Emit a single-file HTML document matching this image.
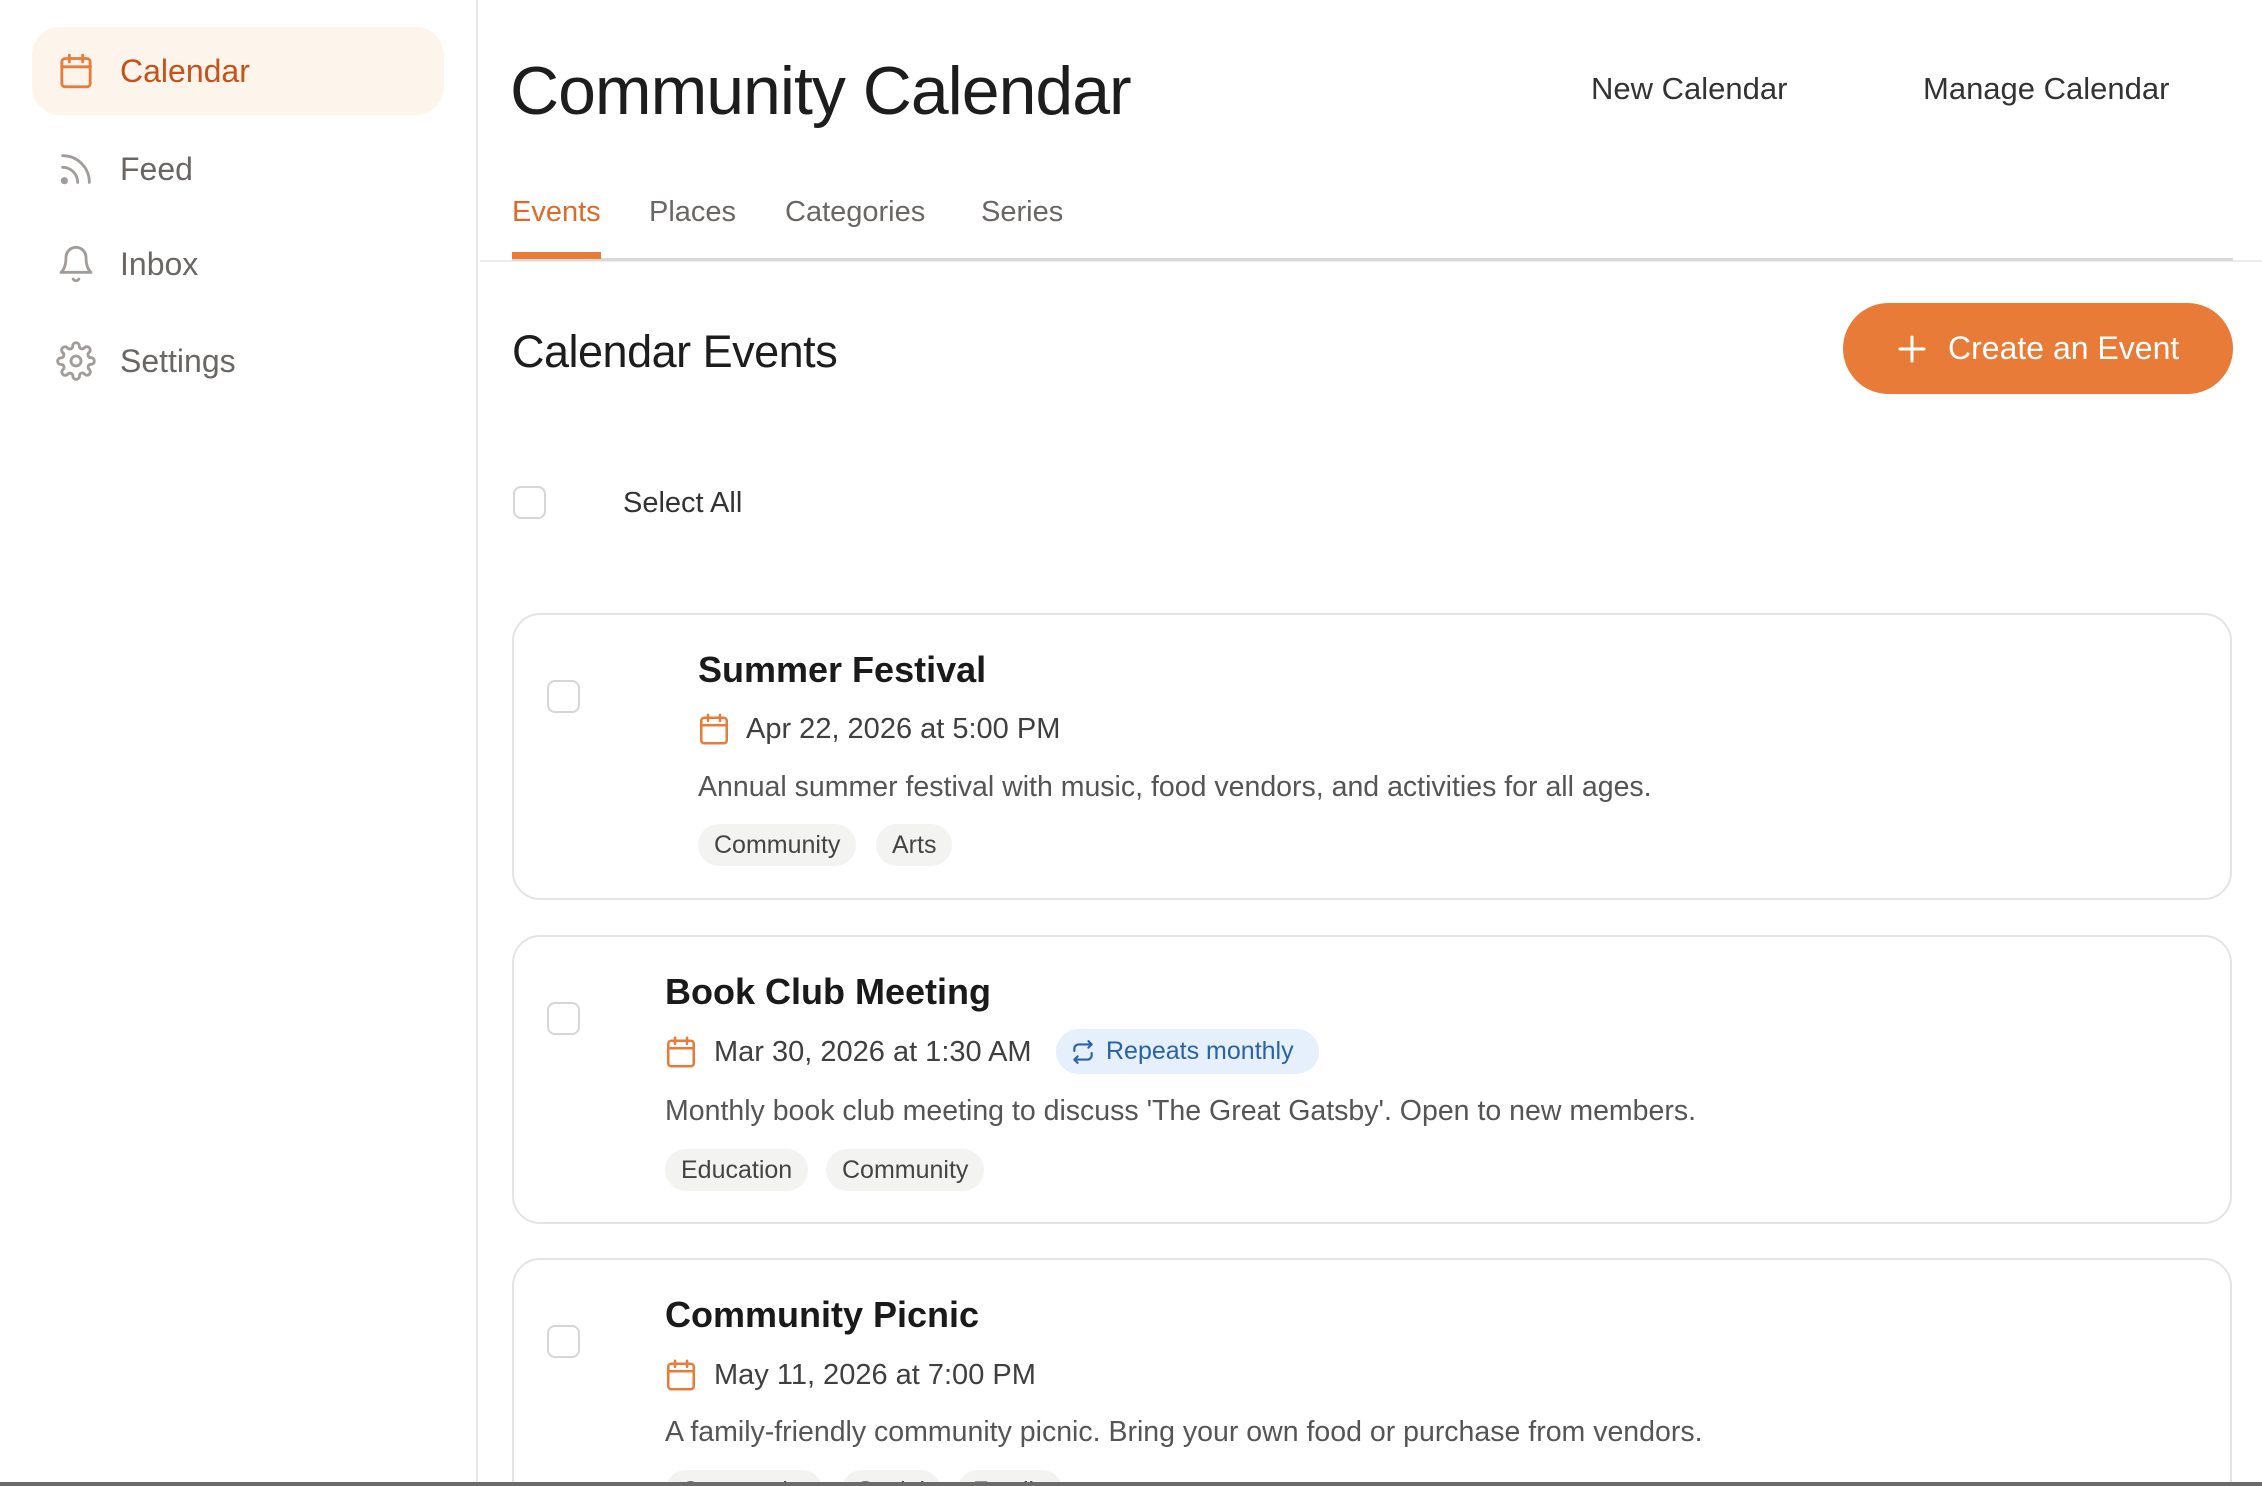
<!DOCTYPE html>
<html style="width:2262px;height:1486px;overflow:hidden"><head><meta charset="utf-8"><style>
*{box-sizing:border-box;margin:0;padding:0}
body{width:2262px;height:1486px;overflow:hidden;background:#fff;font-family:"Liberation Sans",sans-serif;position:relative;color:#1d1d1d}
.a{position:absolute;white-space:nowrap}
.side{position:absolute;left:0;top:0;width:478px;height:1486px;border-right:2px solid #e8e8e8}
.nav{position:absolute;left:32px;width:412px;height:88px;border-radius:28px;display:flex;align-items:center}
.nav svg{position:absolute;left:24px}
.nav span{position:absolute;left:88px;font-size:32px;color:#6a6664}
.tab{position:absolute;top:196px;font-size:29px;color:#6a6664}
.card{position:absolute;left:512px;width:1720px;border:2px solid #e4e4e4;border-radius:28px;background:#fff}
.cb{position:absolute;width:33px;height:33px;border:2px solid #d6d6d6;border-radius:8px;background:#fff}
.title{font-size:36px;font-weight:700;color:#1a1a1a}
.date{font-size:29px;color:#3f3f3f}
.desc{font-size:28.5px;color:#555}
.tag{position:absolute;height:42px;line-height:42px;padding:0 16px;border-radius:21px;background:#f3f3f2;font-size:25px;color:#444}
</style></head><body>
<div class="side">
 <div class="nav" style="top:27px;background:#fdf5ec"><svg width="40" height="40" viewBox="0 0 24 24" fill="none" stroke="#e87b38" stroke-width="1.7" stroke-linecap="round"><rect x="3.5" y="4.5" width="17" height="17" rx="2"/><path d="M3.5 9.5h17M8 2.5v4M16 2.5v4"/></svg><span style="color:#c4521a">Calendar</span></div>
 <div class="nav" style="top:125px"><svg width="40" height="40" viewBox="0 0 24 24" fill="none" stroke="#a09c99" stroke-width="1.7" stroke-linecap="round"><path d="M4 11a9 9 0 0 1 9 9M4 4a16 16 0 0 1 16 16"/><circle cx="5" cy="19" r="1.3" fill="#a09c99"/></svg><span>Feed</span></div>
 <div class="nav" style="top:220px"><svg width="40" height="40" viewBox="0 0 24 24" fill="none" stroke="#a09c99" stroke-width="1.7" stroke-linecap="round" stroke-linejoin="round"><path d="M6 8a6 6 0 0 1 12 0c0 7 3 9 3 9H3s3-2 3-9M10.3 21a1.9 1.9 0 0 0 3.4 0"/></svg><span>Inbox</span></div>
 <div class="nav" style="top:317px"><svg width="40" height="40" viewBox="0 0 24 24" fill="none" stroke="#a09c99" stroke-width="1.7" stroke-linejoin="round"><circle cx="12" cy="12" r="3"/><path d="M19.4 15a1.7 1.7 0 0 0 .3 1.8l.1.1a2 2 0 1 1-2.8 2.8l-.1-.1a1.7 1.7 0 0 0-1.8-.3 1.7 1.7 0 0 0-1 1.5V21a2 2 0 1 1-4 0v-.1a1.7 1.7 0 0 0-1.1-1.5 1.7 1.7 0 0 0-1.8.3l-.1.1a2 2 0 1 1-2.8-2.8l.1-.1a1.7 1.7 0 0 0 .3-1.8 1.7 1.7 0 0 0-1.5-1H3a2 2 0 1 1 0-4h.1a1.7 1.7 0 0 0 1.5-1.1 1.7 1.7 0 0 0-.3-1.8l-.1-.1a2 2 0 1 1 2.8-2.8l.1.1a1.7 1.7 0 0 0 1.8.3H9a1.7 1.7 0 0 0 1-1.5V3a2 2 0 1 1 4 0v.1a1.7 1.7 0 0 0 1 1.5 1.7 1.7 0 0 0 1.8-.3l.1-.1a2 2 0 1 1 2.8 2.8l-.1.1a1.7 1.7 0 0 0-.3 1.8V9a1.7 1.7 0 0 0 1.5 1H21a2 2 0 1 1 0 4h-.1a1.7 1.7 0 0 0-1.5 1z"/></svg><span>Settings</span></div>
</div>

<div class="a" style="left:510px;top:52px;font-size:68px;color:#1d1d1d;letter-spacing:-1px">Community Calendar</div>
<div class="a" style="left:1591px;top:71px;font-size:31px;color:#333">New Calendar</div>
<div class="a" style="left:1923px;top:71px;font-size:31px;color:#333">Manage Calendar</div>

<div class="tab" style="left:512px;color:#e0692a">Events</div>
<div class="tab" style="left:649px">Places</div>
<div class="tab" style="left:785px">Categories</div>
<div class="tab" style="left:981px">Series</div>
<div class="a" style="left:480px;top:260px;width:1782px;height:2px;background:#ececec"></div>
<div class="a" style="left:512px;top:258px;width:1721px;height:3px;background:#d8d8d8"></div>
<div class="a" style="left:512px;top:252px;width:89px;height:7px;background:#e87b38"></div>

<div class="a" style="left:512px;top:326px;font-size:45px;color:#1d1d1d;letter-spacing:-0.5px">Calendar Events</div>
<div class="a" style="left:1843px;top:303px;width:390px;height:91px;border-radius:46px;background:#e87b38;color:#fff;font-size:32px;line-height:91px">
 <svg style="position:absolute;left:54px;top:31px" width="30" height="30" viewBox="0 0 30 30" stroke="#fff" stroke-width="3" stroke-linecap="round"><path d="M15 3v24M3 15h24"/></svg>
 <span style="position:absolute;left:105px">Create an Event</span></div>

<div class="cb" style="left:513px;top:486px"></div>
<div class="a" style="left:623px;top:487px;font-size:29px;color:#333">Select All</div>

<div class="card" style="top:613px;height:287px">
 <div class="cb" style="left:33px;top:65px"></div>
 <div class="a title" style="left:184px;top:34px">Summer Festival</div>
 <svg class="a" style="left:182px;top:96px" width="36" height="36" viewBox="0 0 24 24" fill="none" stroke="#e87b38" stroke-width="1.7" stroke-linecap="round"><rect x="3.5" y="4.5" width="17" height="17" rx="2"/><path d="M3.5 9.5h17M8 2.5v4M16 2.5v4"/></svg>
 <div class="a date" style="left:232px;top:98px">Apr 22, 2026 at 5:00 PM</div>
 <div class="a desc" style="left:184px;top:156px">Annual summer festival with music, food vendors, and activities for all ages.</div>
 <div class="tag" style="left:184px;top:209px">Community</div>
 <div class="tag" style="left:362px;top:209px">Arts</div>
</div>

<div class="card" style="top:935px;height:289px">
 <div class="cb" style="left:33px;top:65px"></div>
 <div class="a title" style="left:151px;top:34px">Book Club Meeting</div>
 <svg class="a" style="left:149px;top:97px" width="36" height="36" viewBox="0 0 24 24" fill="none" stroke="#e87b38" stroke-width="1.7" stroke-linecap="round"><rect x="3.5" y="4.5" width="17" height="17" rx="2"/><path d="M3.5 9.5h17M8 2.5v4M16 2.5v4"/></svg>
 <div class="a date" style="left:200px;top:99px">Mar 30, 2026 at 1:30 AM</div>
 <div class="a" style="left:542px;top:92px;width:263px;height:45px;border-radius:23px;background:#e5f0fc;color:#2a62a6;font-size:25px;line-height:45px">
  <svg style="position:absolute;left:14px;top:10px" width="26" height="26" viewBox="0 0 24 24" fill="none" stroke="#2a62a6" stroke-width="2" stroke-linecap="round" stroke-linejoin="round"><path d="M17 2l3 3-3 3M4 11V9a4 4 0 0 1 4-4h12M7 22l-3-3 3-3M20 13v2a4 4 0 0 1-4 4H4"/></svg>
  <span style="position:absolute;left:50px">Repeats monthly</span></div>
 <div class="a desc" style="left:151px;top:158px">Monthly book club meeting to discuss 'The Great Gatsby'. Open to new members.</div>
 <div class="tag" style="left:151px;top:212px">Education</div>
 <div class="tag" style="left:312px;top:212px">Community</div>
</div>

<div class="card" style="top:1258px;height:228px;border-bottom:none;border-radius:28px 28px 0 0">
 <div class="cb" style="left:33px;top:65px"></div>
 <div class="a title" style="left:151px;top:34px">Community Picnic</div>
 <svg class="a" style="left:149px;top:97px" width="36" height="36" viewBox="0 0 24 24" fill="none" stroke="#e87b38" stroke-width="1.7" stroke-linecap="round"><rect x="3.5" y="4.5" width="17" height="17" rx="2"/><path d="M3.5 9.5h17M8 2.5v4M16 2.5v4"/></svg>
 <div class="a date" style="left:200px;top:99px">May 11, 2026 at 7:00 PM</div>
 <div class="a desc" style="left:151px;top:156px">A family-friendly community picnic. Bring your own food or purchase from vendors.</div>
 <div class="tag" style="left:151px;top:210px">Community</div>
 <div class="tag" style="left:327px;top:210px">Social</div>
 <div class="tag" style="left:443px;top:210px">Family</div>
</div>

<div class="a" style="left:0;top:1482px;width:2262px;height:4px;background:#6b6b6b"></div>
</body></html>
